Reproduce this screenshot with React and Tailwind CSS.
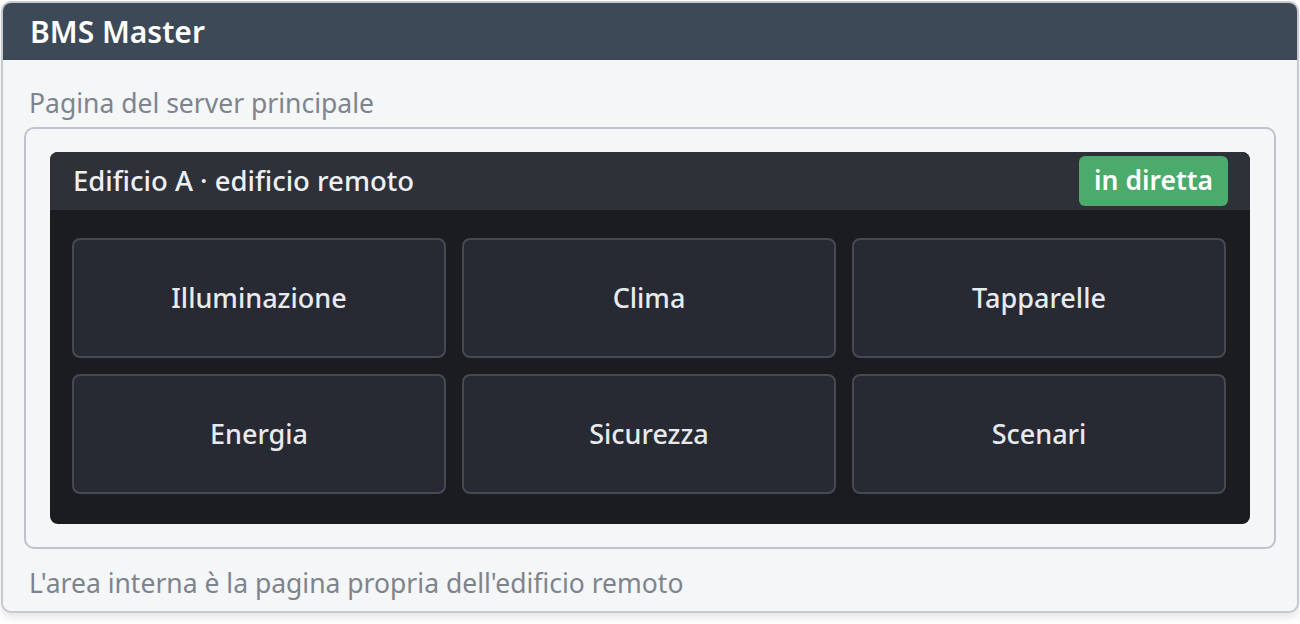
const tiles = ['Illuminazione', 'Clima', 'Tapparelle', 'Energia', 'Sicurezza', 'Scenari']

export default function App() {
    return (
        <div className="w-[1300px] h-[624px] bg-white p-px"
            style={{ fontFamily: "'Noto Sans', 'Open Sans', sans-serif" }}>
            <div className="w-[1298px] h-[612px] flex flex-col rounded-[10px] border-2 border-[#c5c9d0] bg-[#f4f6f8] overflow-hidden shadow-[0_5px_8px_rgba(0,0,0,0.10)]">

                {/* Barra titolo */}
                <div className="h-[57px] shrink-0 flex items-center px-[27px] bg-[#3e4958]">
                    <span className="text-white text-[30px] font-semibold">BMS Master</span>
                </div>

                <div className="flex-1 flex flex-col px-[21px] pt-[24px]">
                    <p className="text-[#7e848d] text-[26.5px] leading-[38px] pl-[5px] mb-[5px]">
                        Pagina del server principale
                    </p>

                    {/* Cornice interna */}
                    <div className="h-[422px] shrink-0 border-2 border-[#bfc3cb] rounded-[10px] py-[23px] px-6">
                        <div className="h-full flex flex-col rounded-lg overflow-hidden bg-[#1b1c20]">
                            <div className="h-[58px] shrink-0 flex items-center justify-between pl-[23px] pr-[22px] bg-[#2f3139]">
                                <span className="text-[#eef0f3] text-[27.5px] font-medium">Edificio A · edificio remoto</span>
                                <span className="h-[50px] px-[15px] flex items-center rounded-md bg-[#4aab6d] text-white text-[26.5px] font-semibold">
                                    in diretta
                                </span>
                            </div>
                            <div className="grid grid-cols-3 gap-4 pt-[28px] pl-[22px] pr-[24px]">
                                {tiles.map(t => (
                                    <div key={t}
                                        className="h-[120px] flex items-center justify-center rounded-lg border-2 border-[#454953] bg-[#272a32] text-[#e8eaee] text-[27px] font-medium">
                                        {t}
                                    </div>
                                ))}
                            </div>
                        </div>
                    </div>

                    <p className="text-[#7e848d] text-[26.5px] leading-[38px] pl-[5px] mt-[15px]">
                        L'area interna è la pagina propria dell'edificio remoto
                    </p>
                </div>
            </div>
        </div>
    )
}
